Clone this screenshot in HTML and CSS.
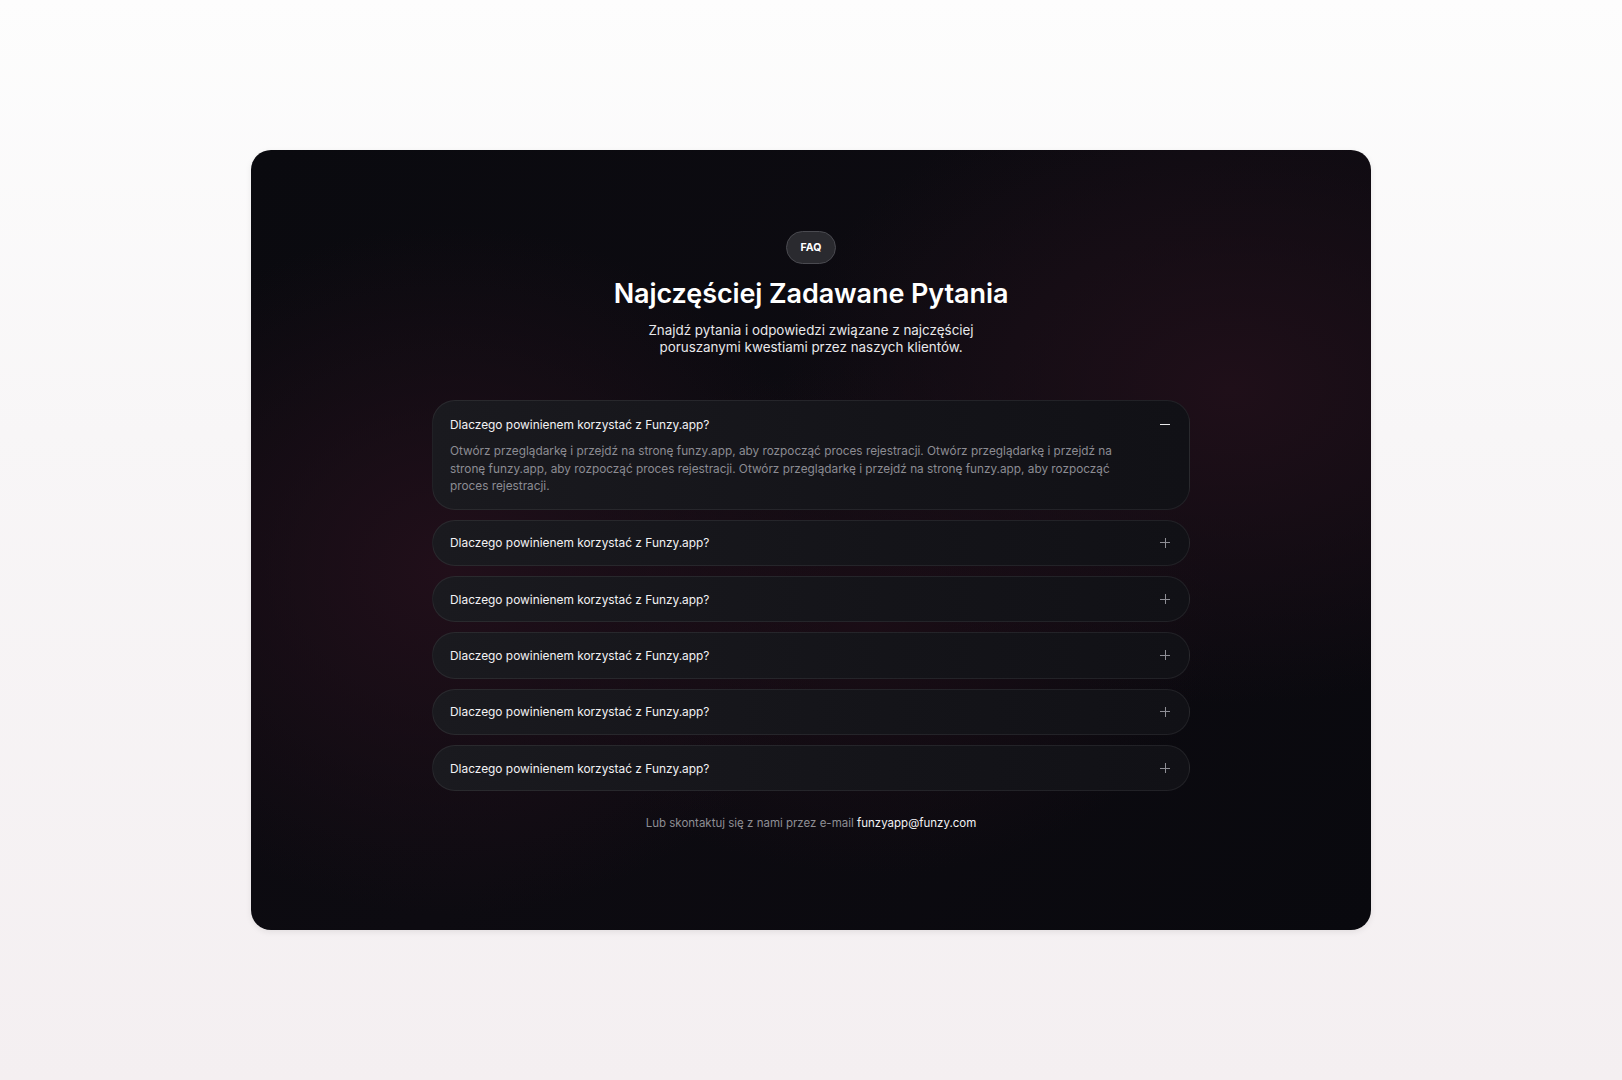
FILE: index.html
```html
<!DOCTYPE html>
<html>
    <head>
        <meta charset="UTF-8">
        <link rel="stylesheet" href="styles.css">
        <title>FAQ - Funzy.app</title>
    </head>
    <body>
        <div class="card">
            <span class="badge">FAQ</span>
            <h1 class="title">Najczęściej Zadawane Pytania</h1>
            <p class="subtitle">Znajdź pytania i odpowiedzi związane z najczęściej poruszanymi kwestiami przez naszych klientów.</p>

            <div class="faq_list">
                <div class="faq_item open">
                    <div class="faq_question">
                        <span>Dlaczego powinienem korzystać z Funzy.app?</span>
                        <span class="icon minus"></span>
                    </div>
                    <p class="faq_answer">Otwórz przeglądarkę i przejdź na stronę funzy.app, aby rozpocząć proces rejestracji. Otwórz przeglądarkę i przejdź na stronę funzy.app, aby rozpocząć proces rejestracji. Otwórz przeglądarkę i przejdź na stronę funzy.app, aby rozpocząć proces rejestracji.</p>
                </div>
                <div class="faq_item">
                    <div class="faq_question">
                        <span>Dlaczego powinienem korzystać z Funzy.app?</span>
                        <span class="icon plus"></span>
                    </div>
                </div>
                <div class="faq_item">
                    <div class="faq_question">
                        <span>Dlaczego powinienem korzystać z Funzy.app?</span>
                        <span class="icon plus"></span>
                    </div>
                </div>
                <div class="faq_item">
                    <div class="faq_question">
                        <span>Dlaczego powinienem korzystać z Funzy.app?</span>
                        <span class="icon plus"></span>
                    </div>
                </div>
                <div class="faq_item">
                    <div class="faq_question">
                        <span>Dlaczego powinienem korzystać z Funzy.app?</span>
                        <span class="icon plus"></span>
                    </div>
                </div>
                <div class="faq_item">
                    <div class="faq_question">
                        <span>Dlaczego powinienem korzystać z Funzy.app?</span>
                        <span class="icon plus"></span>
                    </div>
                </div>
            </div>

            <p class="contact">Lub skontaktuj się z nami przez e-mail <span class="mail">funzyapp@funzy.com</span></p>
        </div>
    </body>
</html>
```

FILE: styles.css
```css
html,body{
    height:100%;
    margin:0;
}
body{
    background:linear-gradient(180deg, #fdfdfd 0%, #f8f6f7 40%, #f4eff1 100%);
    font-family:Inter, "Noto Sans", sans-serif;
    display:flex;
    align-items:center;
    justify-content:center;
}
.card{
    width:1120px;
    height:780px;
    box-sizing:border-box;
    border-radius:20px;
    padding-top:81px;
    display:flex;
    flex-direction:column;
    align-items:center;
    background:
        radial-gradient(ellipse 520px 460px at 200px 420px, rgba(33,15,26,1), rgba(33,15,26,0) 75%),
        radial-gradient(ellipse 600px 420px at 980px 240px, rgba(31,15,25,1), rgba(31,15,25,0) 75%),
        radial-gradient(ellipse 460px 340px at 620px 470px, rgba(28,13,22,0.9), rgba(28,13,22,0) 75%),
        linear-gradient(135deg, #0a0a0f 0%, #0d0b11 50%, #09090e 100%);
    box-shadow:0 2px 6px rgba(0,0,0,0.08);
}
.badge{
    width:50px;
    height:33px;
    box-sizing:border-box;
    border:1px solid #4a4a50;
    border-radius:17px;
    background:#2a2a2f;
    color:#ffffff;
    font-size:10.5px;
    font-weight:700;
    display:flex;
    align-items:center;
    justify-content:center;
}
.title{
    margin:14px 0 0 0;
    font-size:27px;
    line-height:32px;
    font-weight:600;
    color:#ffffff;
    letter-spacing:-0.1px;
}
.subtitle{
    margin:12px 0 0 0;
    width:350px;
    text-align:center;
    font-size:13.4px;
    line-height:17px;
    color:#e8e8ea;
}
.faq_list{
    margin-top:44px;
    width:758px;
    display:flex;
    flex-direction:column;
    gap:10px;
}
.faq_item{
    border:1px solid rgba(255,255,255,0.07);
    border-radius:23px;
    background:linear-gradient(90deg, #1a1a1f 0%, #141419 60%, #111116 100%);
}
.faq_question{
    height:44.4px;
    padding:0 17px;
    display:flex;
    align-items:center;
    justify-content:space-between;
    font-size:11.9px;
    color:#f2f2f4;
}
.open .faq_question{
    height:16px;
    padding-top:15px;
}
.faq_answer{
    margin:11px 0 0 0;
    padding:0 17px 13px 17px;
    max-width:670px;
    font-size:11.8px;
    line-height:17.5px;
    color:#8c8c93;
}
.icon{
    position:relative;
    width:10px;
    height:10px;
    margin-right:2px;
}
.icon::before,
.icon::after{
    content:"";
    position:absolute;
    background:#8e8e95;
}
.icon::before{
    left:0;
    top:4.5px;
    width:10px;
    height:1px;
}
.plus::after{
    left:4.5px;
    top:0;
    width:1px;
    height:10px;
}
.minus::before{
    background:#e8e8ea;
    height:1.5px;
}
.contact{
    margin:24px 0 0 0;
    font-size:11.5px;
    line-height:16px;
    color:#8e8e94;
}
.mail{
    color:#f2f2f4;
}
```
